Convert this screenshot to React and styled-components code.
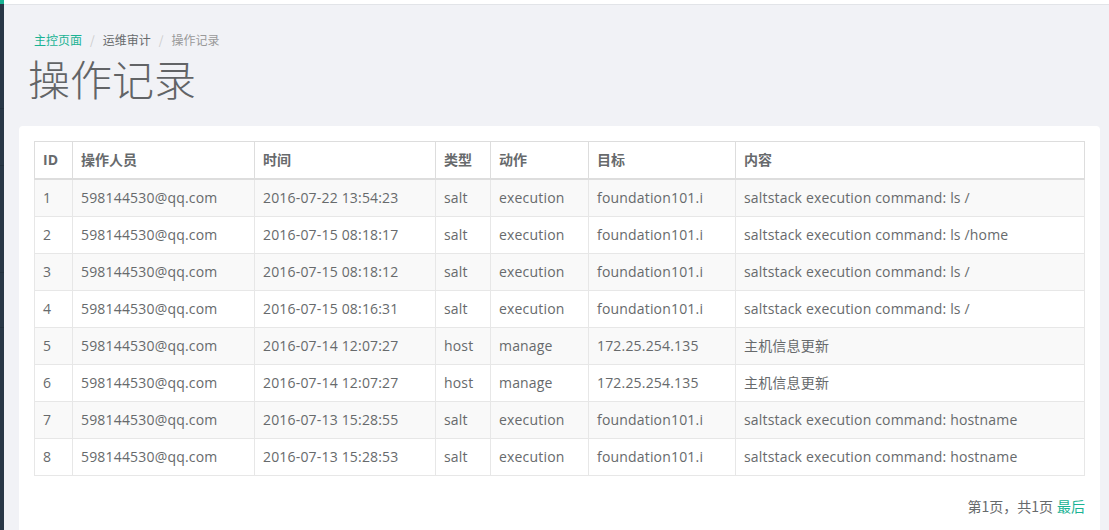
import React from 'react';
import styled, {createGlobalStyle} from 'styled-components';

const GlobalStyle = createGlobalStyle`
    html, body {
        margin: 0;
        padding: 0;
        height: 100%;
    }
    body {
        font-family: "Open Sans", "Noto Sans CJK SC", sans-serif;
        font-size: 14px;
        color: #676a6c;
        background: #f1f2f6;
        overflow: hidden;
    }
`;

const Layout = styled.div`
    display: flex;
    min-height: 530px;
`;

const Sidebar = styled.div`
    width: 4px;
    flex-shrink: 0;
    background: #283746;
    border-top: 4px solid #1ab394;
    display: flex;
    flex-direction: column;
`;

const SideItem = styled.div`
    height: ${props => props.h}px;
    border-bottom: 1px solid #22303d;
`;

const Main = styled.div`
    flex: 1;
    display: flex;
    flex-direction: column;
`;

const TopBar = styled.div`
    height: 4px;
    background: #fff;
    border-bottom: 1px solid #e2e4e8;
`;

const Heading = styled.div`
    padding: 27px 15px 0 26px;
    height: 116px;
    box-sizing: border-box;
`;

const Crumbs = styled.ol`
    list-style: none;
    margin: 0 0 0 4px;
    padding: 0;
    display: flex;
    font-size: 12px;
    line-height: 16px;
    font-family: "Noto Sans CJK SC", sans-serif;
    li + li::before {
        content: "/";
        color: #ccc;
        padding: 0 8px;
    }
`;

const Crumb = styled.li`
    color: ${props => props.color};
`;

const Title = styled.h2`
    margin: 0 0 0 -2px;
    font-size: 42px;
    font-weight: 300;
    line-height: 60px;
    font-family: "Noto Sans CJK SC", sans-serif;
    color: #626466;
`;

const Box = styled.div`
    background: #fff;
    margin: 5px 9px 0 15px;
    border-radius: 4px;
    padding: 15px 15px 20px;
    flex: 1;
`;

const Table = styled.table`
    width: 100%;
    border-collapse: collapse;
    table-layout: fixed;
    border: 1px solid #ddd;
`;

const Th = styled.th`
    text-align: left;
    font-weight: 700;
    padding: 8px;
    line-height: 20px;
    border: 1px solid #ddd;
    border-bottom: 2px solid #ddd;
    width: ${props => (props.w ? `${props.w - 17}px` : 'auto')};
    color: #676a6c;
`;

const Row = styled.tr`
    background: ${props => (props.odd ? '#f9f9f9' : '#fff')};
`;

const Td = styled.td`
    padding: 8px;
    line-height: 20px;
    border: 1px solid #e7e7e7;
    white-space: nowrap;
    overflow: hidden;
    letter-spacing: 0.18px;
`;

const Pager = styled.div`
    text-align: right;
    margin-top: 20px;
    font-size: 14px;
    line-height: 20px;
    font-family: "Noto Sans CJK SC", sans-serif;
`;

const PagerLink = styled.a`
    color: #1ab394;
    text-decoration: none;
    margin-left: 4px;
`;

const columns = [
    {title: 'ID', w: 38},
    {title: '操作人员', w: 182},
    {title: '时间', w: 181},
    {title: '类型', w: 55},
    {title: '动作', w: 98},
    {title: '目标', w: 147},
    {title: '内容'}
];

const records = [
    ['1', '598144530@qq.com', '2016-07-22 13:54:23', 'salt', 'execution', 'foundation101.i', 'saltstack execution command: ls /'],
    ['2', '598144530@qq.com', '2016-07-15 08:18:17', 'salt', 'execution', 'foundation101.i', 'saltstack execution command: ls /home'],
    ['3', '598144530@qq.com', '2016-07-15 08:18:12', 'salt', 'execution', 'foundation101.i', 'saltstack execution command: ls /'],
    ['4', '598144530@qq.com', '2016-07-15 08:16:31', 'salt', 'execution', 'foundation101.i', 'saltstack execution command: ls /'],
    ['5', '598144530@qq.com', '2016-07-14 12:07:27', 'host', 'manage', '172.25.254.135', '主机信息更新'],
    ['6', '598144530@qq.com', '2016-07-14 12:07:27', 'host', 'manage', '172.25.254.135', '主机信息更新'],
    ['7', '598144530@qq.com', '2016-07-13 15:28:55', 'salt', 'execution', 'foundation101.i', 'saltstack execution command: hostname'],
    ['8', '598144530@qq.com', '2016-07-13 15:28:53', 'salt', 'execution', 'foundation101.i', 'saltstack execution command: hostname']
];

export default function App() {
    return (
        <>
            <GlobalStyle />
            <Layout>
                <Sidebar>
                    <SideItem h={104} />
                    <SideItem h={56} />
                    <SideItem h={106} />
                    <SideItem h={54} />
                </Sidebar>
                <Main>
                    <TopBar />
                    <Heading>
                        <Crumbs>
                            <Crumb color="#1ab394">主控页面</Crumb>
                            <Crumb color="#676a6c">运维审计</Crumb>
                            <Crumb color="#999">操作记录</Crumb>
                        </Crumbs>
                        <Title>操作记录</Title>
                    </Heading>
                    <Box>
                        <Table>
                            <thead>
                                <tr>
                                    {columns.map(c => (
                                        <Th key={c.title} w={c.w}>{c.title}</Th>
                                    ))}
                                </tr>
                            </thead>
                            <tbody>
                                {records.map((r, i) => (
                                    <Row key={r[0]} odd={i % 2 === 0}>
                                        {r.map((cell, j) => (
                                            <Td key={j}>{cell}</Td>
                                        ))}
                                    </Row>
                                ))}
                            </tbody>
                        </Table>
                        <Pager>
                            第1页，共1页<PagerLink href="#">最后</PagerLink>
                        </Pager>
                    </Box>
                </Main>
            </Layout>
        </>
    );
}
